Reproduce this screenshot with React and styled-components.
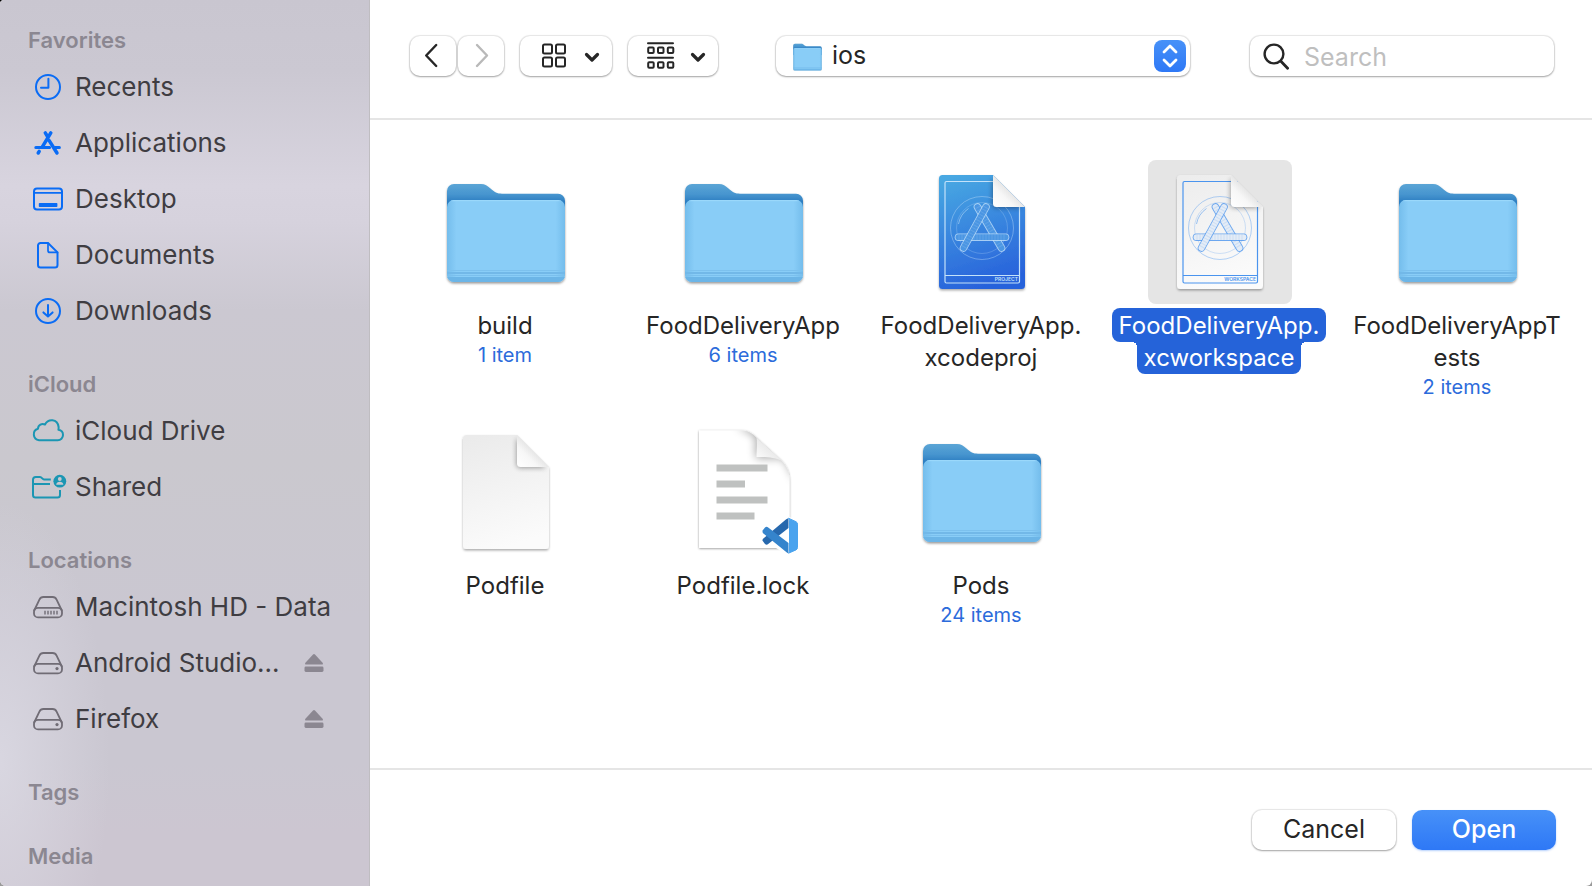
import React, { useState } from "react";
import styled, { createGlobalStyle, css } from "styled-components";

const GlobalStyle = createGlobalStyle`
  *, *::before, *::after { box-sizing: border-box; }
  body {
    margin: 0;
    background: linear-gradient(#000, #9a9a9a);
    font-family: Inter, "Liberation Sans", sans-serif;
    color: #262626;
  }
  button, input, select { font: inherit; color: inherit; }
`;

/* ---------- window ---------- */

const Window = styled.div`
  display: flex;
  min-height: 100vh;
  background: #fff;
  border-radius: 4px 0 6px 6px;
  overflow: hidden;
`;

const Main = styled.main`
  flex: 1;
  min-width: 0;
  display: flex;
  flex-direction: column;
`;

/* ---------- sidebar ---------- */

const Sidebar = styled.nav`
  flex: none;
  width: 370px;
  padding: 21px 0 0;
  display: flex;
  flex-direction: column;
  gap: 26px;
  border-right: 1px solid #bfbdc1;
  background:
    radial-gradient(ellipse 110px 260px at 0 86%, rgba(218, 216, 226, 0.9), rgba(218, 216, 226, 0)),
    linear-gradient(#c9c6d0 0%, #cbc8d2 8%, #d8d4df 21%, #d6d2dd 25%, #cbc8d1 35%, #cac8ce 52%, #cac7d1 70%, #cac7d1 86%, #ccc6d1 94%);
`;

const Group = styled.section`
  display: flex;
  flex-direction: column;
`;

const GroupTitle = styled.h2`
  margin: 0;
  padding-left: 28px;
  font-size: 22px;
  font-weight: 600;
  line-height: 38px;
  color: #8b8791;
`;

const Place = styled.div`
  display: flex;
  align-items: center;
  height: 56px;
  padding: 0 45px 0 31px;
`;

const PlaceLink = styled.a`
  flex: 1;
  display: flex;
  align-items: center;
  gap: 10px;
  min-width: 0;
  font-size: 26px;
  line-height: 32px;
  white-space: nowrap;
  color: #3f3d42;
  text-decoration: none;
`;

const PlaceIcon = styled.svg`
  flex: none;
  width: 34px;
  height: 34px;
  overflow: visible;
  fill: none;
  stroke: ${(p) => p.$tint};
  stroke-width: 2;
  stroke-linecap: round;
  stroke-linejoin: round;
`;

const EjectButton = styled.button`
  display: flex;
  padding: 0;
  border: 0;
  background: none;
  color: #8b8791;
`;

/* ---------- toolbar ---------- */

const Toolbar = styled.header`
  display: flex;
  align-items: center;
  height: 120px;
  padding: 0 38px 6px 40px;
  border-bottom: 2px solid #e5e5e5;
`;

const Tools = styled.div`
  display: flex;
  gap: 16px;
`;

const NavPair = styled.div`
  display: flex;
  gap: 2px;
`;

const raised = css`
  border: 0;
  border-radius: 10px;
  background: #fff;
  box-shadow: 0 0 1px 1px rgba(0, 0, 0, 0.09), 0 1px 2px rgba(0, 0, 0, 0.3);
`;

const ToolButton = styled.button`
  ${raised}
  display: flex;
  align-items: center;
  justify-content: center;
  width: ${(p) => p.$width}px;
  height: 40px;
  padding: 0;
  svg {
    overflow: visible;
    fill: none;
    stroke: #262626;
    stroke-linecap: round;
    stroke-linejoin: round;
  }
  &:disabled svg { stroke: #b9b9b9; }
`;

const PathBox = styled.label`
  ${raised}
  flex: 1;
  display: flex;
  align-items: center;
  gap: 6px;
  min-width: 180px;
  height: 40px;
  margin: 0 60px 0 58px;
  padding: 0 4px 0 17px;
`;

const PathSelect = styled.select`
  flex: 1;
  min-width: 0;
  height: 40px;
  padding: 0 0 3px 4px;
  border: 0;
  outline: 0;
  background: none;
  appearance: none;
  font-size: 25px;
`;

const Stepper = styled.span`
  display: flex;
  align-items: center;
  justify-content: center;
  width: 32px;
  height: 32px;
  border-radius: 8px;
  background: linear-gradient(#4791f8, #2e78f6);
`;

const SearchBox = styled.label`
  ${raised}
  display: flex;
  align-items: center;
  gap: 14px;
  width: 304px;
  height: 40px;
  padding: 0 12px;
`;

const SearchInput = styled.input`
  flex: 1;
  min-width: 0;
  height: 40px;
  padding: 2px 0 0;
  border: 0;
  outline: 0;
  background: none;
  font-size: 25px;
  &::placeholder { color: #bfbfbf; opacity: 1; }
`;

/* ---------- files ---------- */

const Files = styled.div`
  flex: 1;
  display: grid;
  grid-template-columns: repeat(5, minmax(0, 1fr));
  grid-auto-rows: 260px;
  align-content: start;
  padding: 40px 15px 20px 17px;
`;

const FileButton = styled.button`
  display: flex;
  flex-direction: column;
  align-items: center;
  justify-content: flex-start;
  padding: 0;
  border: 0;
  background: none;
`;

const Tile = styled.span`
  display: block;
  width: 144px;
  height: 144px;
  margin-bottom: 4px;
  border-radius: 8px;
  background: ${(p) => (p.$selected ? "#e5e5e5" : "transparent")};
`;

const Caption = styled.span`
  display: flex;
  flex-direction: column;
  align-items: center;
  margin-right: 2px;
`;

const NameLine = styled.span`
  position: relative;
  padding: 0 7px;
  border-radius: 0 0 8px 8px;
  font-size: 24px;
  line-height: 32px;
  white-space: nowrap;
  color: #262626;
  &:first-of-type {
    padding-top: 2px;
    border-radius: 8px;
  }
  ${(p) =>
    p.$selected &&
    css`
      color: #fff;
      background: #2563d9;
      & + &::before,
      & + &::after {
        content: "";
        position: absolute;
        top: 0;
        width: 5px;
        height: 5px;
      }
      & + &::before {
        right: 100%;
        background: radial-gradient(circle at 0 100%, transparent 5px, #2563d9 5px);
      }
      & + &::after {
        left: 100%;
        background: radial-gradient(circle at 100% 100%, transparent 5px, #2563d9 5px);
      }
    `}
`;

const Count = styled.span`
  font-size: 20px;
  line-height: 26px;
  color: #2c6bdb;
`;

/* ---------- footer ---------- */

const Footer = styled.footer`
  display: flex;
  justify-content: flex-end;
  gap: 16px;
  padding: 40px 36px 36px;
  border-top: 2px solid #e5e5e5;
`;

const DialogButton = styled.button`
  ${raised}
  width: 144px;
  height: 40px;
  padding: 0 0 2px;
  font-size: 25px;
  line-height: 32px;
  ${(p) =>
    p.$primary &&
    css`
      color: #fff;
      font-weight: 500;
      background: linear-gradient(#4791f8, #2e78f6);
      box-shadow: 0 1px 2px rgba(46, 120, 246, 0.35);
    `}
`;

/* ---------- drawings ---------- */

const placeGlyphs = {
  recents: (
    <>
      <circle cx="17" cy="17" r="12" />
      <path d="M17.4 8.8V17.8H10" />
    </>
  ),
  applications: (
    <g strokeWidth="3.5">
      <path d="M19.8 6.9L11.2 21.2M14.3 6.9l2.4 3.8M18.2 14.6l7.8 12.4M8.2 25.4L7.2 27" />
      <path d="M4.8 21.5H18.6M24.2 21.5h4.2" strokeWidth="3" />
    </g>
  ),
  desktop: (
    <>
      <rect x="3" y="6.5" width="28" height="21" rx="3" />
      <path d="M3.5 10.8h27" strokeWidth="1.7" />
      <rect x="7.8" y="21" width="18.6" height="4" rx="0.8" fill="currentColor" stroke="none" />
    </>
  ),
  documents: (
    <>
      <path d="M17 5H9.5A2.5 2.5 0 0 0 7 7.500V27a2.500 2.500 0 0 0 2.500 2.500H24a2.500 2.500 0 0 0 2.500-2.500V14.400z" />
      <path d="M17 5v7.400a2 2 0 0 0 2 2h7.500" strokeWidth="1.7" />
    </>
  ),
  downloads: (
    <>
      <circle cx="17" cy="17" r="12" />
      <path d="M17 11v11.500M12.400 18.400l4.600 4.200 4.600-4.200" />
    </>
  ),
  cloud: (
    <path d="M8 26.200A5.900 5.900 0 0 1 7 14.700C7 10.800 11 8.900 14 10.500C17 4.600 26.500 4.300 27.600 13C27.700 14 27.600 15 27.400 15.800C30.400 16.200 32 18.400 32 21A5.200 5.200 0 0 1 26.800 26.200Z" />
  ),
  shared: (
    <>
      <path d="M19.800 9.400H13c-1.600 0-2-2.400-4-2.400H4.800A2.800 2.800 0 0 0 2 9.800V25a2.500 2.500 0 0 0 2.500 2.500H26.500A2.500 2.500 0 0 0 29 25V20M2 14h17" strokeLinecap="butt" />
      <circle cx="28.800" cy="11.200" r="6.400" fill="currentColor" stroke="none" />
      <circle cx="28.800" cy="9" r="1.900" fill="#cac8cf" stroke="none" />
      <path d="M25.200 14.800c0-4 7.200-4 7.200 0z" fill="#cac8cf" stroke="none" />
    </>
  ),
  internal: (
    <>
      <path d="M3.200 20.500L8.400 9.600Q9.600 7 12.400 7H21.600Q24.400 7 25.600 9.600L30.800 20.500" strokeWidth="1.800" />
      <rect x="3" y="17.800" width="28" height="9.600" rx="4" strokeWidth="1.800" />
      <path d="M14 20.800v3.600M17 20.800v3.600M20 20.800v3.600M23 20.800v3.600M26 20.800v3.600" strokeWidth="1.400" strokeLinecap="butt" />
    </>
  ),
  external: (
    <>
      <path d="M3.200 20.500L8.400 9.600Q9.600 7 12.400 7H21.600Q24.400 7 25.600 9.600L30.800 20.500" strokeWidth="1.800" />
      <rect x="3" y="17.800" width="28" height="9.600" rx="4" strokeWidth="1.800" />
      <circle cx="26" cy="22.600" r="1.600" fill="currentColor" stroke="none" />
    </>
  ),
};

const EjectGlyph = () => (
  <svg width="20" height="20" viewBox="0 0 20 20" fill="currentColor" aria-hidden="true">
    <path d="M9 1.500Q10 .5 11 1.500L18.800 10Q19.600 11.500 18 11.600H2Q.4 11.500 1.200 10Z" />
    <rect x="0.500" y="13.600" width="19" height="5.400" rx="1.400" />
  </svg>
);

const folderBack =
  "M13 31a7 7 0 0 1 7-7h27c4 0 6.500 1.800 9.500 4.500c4 3.600 6.500 5.200 11.500 5.200h56a7 7 0 0 1 7 7v25H13z";

function FolderDrawing({ id, small }) {
  const size = small
    ? { width: 29, height: 29, viewBox: "12 18 120 106", preserveAspectRatio: "none" }
    : { width: 144, height: 144, viewBox: "0 0 144 144" };
  return (
    <svg {...size} aria-hidden="true">
      <defs>
        <linearGradient id={`${id}-back`} x1="0" y1="0" x2="0" y2="1">
          <stop offset="0" stopColor="#5ba5d6" />
          <stop offset="0.250" stopColor="#4795cf" />
          <stop offset="0.420" stopColor="#2e7fc2" />
        </linearGradient>
        <linearGradient id={`${id}-front`}>
          <stop offset="0" stopColor="#74bdec" />
          <stop offset="0.080" stopColor="#89cdf7" />
          <stop offset="0.920" stopColor="#89cdf7" />
          <stop offset="1" stopColor="#74bdec" />
        </linearGradient>
        <filter id={`${id}-shade`} x="-10%" y="-10%" width="120%" height="125%">
          <feDropShadow dx="0" dy="1.500" stdDeviation="1.200" floodColor="#000" floodOpacity="0.400" />
        </filter>
        <clipPath id={`${id}-clip`}>
          <rect x="13" y="40" width="118" height="82" rx="7" />
        </clipPath>
      </defs>
      <g filter={`url(#${id}-shade)`}>
        <path d={folderBack} fill={`url(#${id}-back)`} />
        <rect x="13" y="40" width="118" height="82" rx="7" fill={`url(#${id}-front)`} />
      </g>
      <g clipPath={`url(#${id}-clip)`}>
        <rect x="13" y="40" width="118" height="1.200" fill="#9ad8fb" />
        <rect x="13" y="110" width="118" height="1" fill="#7cc1ee" />
        <rect x="13" y="112" width="118" height="2" fill="#72b8e8" />
        <rect x="13" y="115" width="118" height="1" fill="#7abfed" />
        <rect x="13" y="117" width="118" height="5" fill="#6cb5e7" />
      </g>
    </svg>
  );
}

const docShape = "M32.500 15H83l32 32v78.500a3.500 3.500 0 0 1-3.500 3.500h-79a3.500 3.500 0 0 1-3.500-3.500v-107a3.500 3.500 0 0 1 3.500-3.500z";

function DocumentDrawing({ id, from, to, children }) {
  return (
    <svg width="144" height="144" viewBox="0 0 144 144" aria-hidden="true">
      <defs>
        <linearGradient id={`${id}-page`} x1="0.200" y1="0" x2="0.450" y2="1">
          <stop offset="0" stopColor={from} />
          <stop offset="1" stopColor={to} />
        </linearGradient>
        <linearGradient id={`${id}-fold`} x1="0" y1="1" x2="0.550" y2="0.450">
          <stop offset="0" stopColor="#fff" />
          <stop offset="0.600" stopColor="#f7f7f7" />
          <stop offset="1" stopColor="#e2e2e2" />
        </linearGradient>
        <filter id={`${id}-shade`} x="-10%" y="-10%" width="120%" height="120%">
          <feDropShadow dx="0" dy="1.500" stdDeviation="1.300" floodColor="#000" floodOpacity="0.330" />
        </filter>
        <filter id={`${id}-soft`} x="-30%" y="-30%" width="160%" height="160%">
          <feGaussianBlur stdDeviation="2.600" />
        </filter>
        <clipPath id={`${id}-clip`}>
          <path d={docShape} />
        </clipPath>
      </defs>
      <path d={docShape} fill={`url(#${id}-page)`} filter={`url(#${id}-shade)`} />
      <g clipPath={`url(#${id}-clip)`}>
        {children}
        <path d="M82.500 18V44a4 4 0 0 0 4 4H112z" fill="#000" opacity="0.360" filter={`url(#${id}-soft)`} />
      </g>
      <path d="M83 15l32 32H86.500a3.500 3.500 0 0 1-3.500-3.500z" fill={`url(#${id}-fold)`} />
    </svg>
  );
}

function Blueprint({ ink, fill, tag }) {
  const legs = ["M67.500 47L91.500 88", "M48.500 77.200H95.500", "M76 47L53.500 88"];
  return (
    <>
      <g fill="none" stroke={ink}>
        <rect x="35" y="21.500" width="74.500" height="101.500" rx="1.500" strokeWidth="1.200" />
        <path d="M35 115.500h74.500" strokeWidth="1.200" />
        <circle cx="72" cy="68" r="31.500" strokeWidth="0.900" opacity="0.450" />
        <circle cx="72" cy="68" r="25.500" strokeWidth="0.700" opacity="0.350" />
        <path d="M48.500 64a24 24 0 0 1 10-15.500" strokeWidth="0.900" opacity="0.600" />
      </g>
      {legs.map((d) => (
        <g key={d} fill="none" strokeLinecap="round">
          <path d={d} stroke={ink} strokeWidth="7.600" opacity="0.800" />
          <path d={d} stroke={fill} strokeWidth="5.800" />
          <path d={d} stroke={ink} strokeWidth="5.800" strokeDasharray="1 2" strokeLinecap="butt" opacity="0.160" />
        </g>
      ))}
      <text x="108" y="121" textAnchor="end" fontSize="5" fontWeight="600" fill={ink}>
        {tag}
      </text>
    </>
  );
}

function LockDrawing() {
  const page = "M27 10.500H70C78 10.500 82 15 87 20L109 40C114 45 117.500 51 117.500 60V128H27Z";
  return (
    <svg width="144" height="144" viewBox="0 0 144 144" aria-hidden="true">
      <defs>
        <linearGradient id="lock-fold" x1="0" y1="1" x2="0.550" y2="0.450">
          <stop offset="0" stopColor="#fff" />
          <stop offset="1" stopColor="#e8e8e8" />
        </linearGradient>
        <filter id="lock-shade" x="-10%" y="-10%" width="120%" height="120%">
          <feDropShadow dx="0" dy="0.700" stdDeviation="0.900" floodColor="#000" floodOpacity="0.420" />
        </filter>
        <filter id="lock-soft" x="-40%" y="-40%" width="180%" height="180%">
          <feGaussianBlur stdDeviation="5" />
        </filter>
        <clipPath id="lock-clip">
          <path d={page} />
        </clipPath>
      </defs>
      <path d={page} fill="#fff" filter="url(#lock-shade)" />
      <g clipPath="url(#lock-clip)">
        <path d="M64 6L84 16V38H112L124 62L124 6z" fill="#000" opacity="0.360" filter="url(#lock-soft)" />
      </g>
      <path d="M84.500 17.500C85.500 24 84.500 31 84.500 37C93 37 103 37 111 41.500Z" fill="url(#lock-fold)" />
      <g fill="#bfc1c0">
        <rect x="44.500" y="44.500" width="51" height="7" />
        <rect x="44.500" y="60.500" width="28.500" height="7" />
        <rect x="44.500" y="76.500" width="51" height="7" />
        <rect x="44.500" y="92.500" width="38" height="7" />
      </g>
      <path d="M88 118L99 104L116 96.500L128 101V132L116 135.500L104 128z" fill="#fff" />
      <path d="M90.400 120.500L93 124q1.500 1.300 3.200.1L116.500 108V98.200q-1.500.3-2.600 1.400L90.800 119z" fill="#2768ad" />
      <path d="M90.400 110.800L93 107.500q1.500-1.300 3.200-.1L116.500 123v10.200q-1.500-.3-2.600-1.400L90.800 113z" fill="#3584cc" />
      <path d="M116.500 98.200L124 101.700q1.500.8 1.500 2.500v23.200q0 1.700-1.500 2.500L116.500 133.200q1-.5 1-2V100.200q0-1.500-1-2z" fill="#4aa3ee" stroke="#4aa3ee" />
    </svg>
  );
}

/* ---------- data ---------- */

const BLUE = "#0a6cf5";
const TEAL = "#1b96b3";
const GREY = "#706c75";

const groups = [
  {
    title: "Favorites",
    places: [
      { name: "Recents", glyph: "recents", tint: BLUE },
      { name: "Applications", glyph: "applications", tint: BLUE },
      { name: "Desktop", glyph: "desktop", tint: BLUE },
      { name: "Documents", glyph: "documents", tint: BLUE },
      { name: "Downloads", glyph: "downloads", tint: BLUE },
    ],
  },
  {
    title: "iCloud",
    places: [
      { name: "iCloud Drive", glyph: "cloud", tint: TEAL },
      { name: "Shared", glyph: "shared", tint: TEAL },
    ],
  },
  {
    title: "Locations",
    places: [
      { name: "Macintosh HD - Data", glyph: "internal", tint: GREY },
      { name: "Android Studio...", glyph: "external", tint: GREY, eject: true },
      { name: "Firefox", glyph: "external", tint: GREY, eject: true },
    ],
  },
  { title: "Tags", places: [] },
  { title: "Media", places: [] },
];

const files = [
  { lines: ["build"], kind: "folder", count: "1 item" },
  { lines: ["FoodDeliveryApp"], kind: "folder", count: "6 items" },
  { lines: ["FoodDeliveryApp.", "xcodeproj"], kind: "project" },
  { lines: ["FoodDeliveryApp.", "xcworkspace"], kind: "workspace" },
  { lines: ["FoodDeliveryAppT", "ests"], kind: "folder", count: "2 items" },
  { lines: ["Podfile"], kind: "plain" },
  { lines: ["Podfile.lock"], kind: "lock" },
  { lines: ["Pods"], kind: "folder", count: "24 items" },
];

function FileDrawing({ kind, id }) {
  if (kind === "folder") return <FolderDrawing id={id} />;
  if (kind === "lock") return <LockDrawing />;
  if (kind === "project")
    return (
      <DocumentDrawing id={id} from="#48a8e2" to="#2862db">
        <Blueprint ink="#c4e2fa" fill="#4b96e3" tag="PROJECT" />
      </DocumentDrawing>
    );
  if (kind === "workspace")
    return (
      <DocumentDrawing id={id} from="#ededed" to="#fbfbfb">
        <Blueprint ink="#4a94ee" fill="#e4ecf6" tag="WORKSPACE" />
      </DocumentDrawing>
    );
  return <DocumentDrawing id={id} from="#ebebeb" to="#fbfbfb" />;
}

export default function App() {
  const [selected, setSelected] = useState(3);
  return (
    <>
      <GlobalStyle />
      <Window>
        <Sidebar aria-label="Places">
          {groups.map((group) => (
            <Group key={group.title}>
              <GroupTitle>{group.title}</GroupTitle>
              {group.places.map((place) => (
                <Place key={place.name}>
                  <PlaceLink href="#">
                    <PlaceIcon $tint={place.tint} color={place.tint} viewBox="0 0 34 34" aria-hidden="true">
                      {placeGlyphs[place.glyph]}
                    </PlaceIcon>
                    {place.name}
                  </PlaceLink>
                  {place.eject && (
                    <EjectButton type="button" aria-label={`Eject ${place.name}`}>
                      <EjectGlyph />
                    </EjectButton>
                  )}
                </Place>
              ))}
            </Group>
          ))}
        </Sidebar>

        <Main>
          <Toolbar>
            <Tools>
              <NavPair>
                <ToolButton type="button" $width={46} aria-label="Back">
                  <svg width="18" height="26" viewBox="0 0 18 26" strokeWidth="2.400">
                    <path d="M12.200 2L2.200 12.500l10 10.500" />
                  </svg>
                </ToolButton>
                <ToolButton type="button" $width={46} aria-label="Forward" disabled>
                  <svg width="18" height="26" viewBox="0 0 18 26" strokeWidth="2.400">
                    <path d="M5 2L15 12.500L5 23" />
                  </svg>
                </ToolButton>
              </NavPair>
              <ToolButton type="button" $width={92} aria-label="View as icons">
                <svg width="60" height="28" viewBox="0 0 60 28" aria-hidden="true">
                  <g strokeWidth="2">
                    <rect x="7" y="2.500" width="9" height="9" rx="1.500" />
                    <rect x="20" y="2.500" width="9" height="9" rx="1.500" />
                    <rect x="7" y="15.500" width="9" height="9" rx="1.500" />
                    <rect x="20" y="15.500" width="9" height="9" rx="1.500" />
                  </g>
                  <path d="M50.500 12.500l5.500 5.500 5.500-5.500" strokeWidth="3.200" />
                </svg>
              </ToolButton>
              <ToolButton type="button" $width={90} aria-label="Group items">
                <svg width="60" height="28" viewBox="0 0 60 28" aria-hidden="true">
                  <g strokeWidth="2">
                    <path d="M5 1.200H30M5 15.800H30" />
                    {[5.2, 15, 24.8].map((x) => (
                      <g key={x}>
                        <rect x={x} y="5.500" width="5.500" height="5.500" rx="1" />
                        <rect x={x} y="20.200" width="5.500" height="5.500" rx="1" />
                      </g>
                    ))}
                  </g>
                  <path d="M49.500 12.500l5.500 5.500 5.500-5.500" strokeWidth="3.200" />
                </svg>
              </ToolButton>
            </Tools>

            <PathBox>
              <FolderDrawing id="path" small />
              <PathSelect aria-label="Location" defaultValue="ios">
                <option value="ios">ios</option>
              </PathSelect>
              <Stepper aria-hidden="true">
                <svg width="20" height="28" viewBox="0 0 20 28" fill="none" stroke="#fff" strokeWidth="2.800" strokeLinecap="round" strokeLinejoin="round">
                  <path d="M4 10L10 4l6 6M4 18l6 6 6-6" />
                </svg>
              </Stepper>
            </PathBox>

            <SearchBox>
              <svg width="28" height="28" viewBox="0 0 28 28" fill="none" stroke="#262626" strokeWidth="2.400" strokeLinecap="round" aria-hidden="true">
                <circle cx="12" cy="12" r="9.400" />
                <path d="M18.900 19.300L25.600 26.200" strokeWidth="2.800" />
              </svg>
              <SearchInput type="text" placeholder="Search" aria-label="Search" />
            </SearchBox>
          </Toolbar>

          <Files>
            {files.map((file, i) => {
              const on = i === selected;
              return (
                <FileButton key={file.lines.join("")} type="button" aria-pressed={on} onClick={() => setSelected(i)}>
                  <Tile $selected={on}>
                    <FileDrawing kind={file.kind} id={`file-${i}`} />
                  </Tile>
                  <Caption>
                    {file.lines.map((line) => (
                      <NameLine key={line} $selected={on}>
                        {line}
                      </NameLine>
                    ))}
                    {file.count && <Count>{file.count}</Count>}
                  </Caption>
                </FileButton>
              );
            })}
          </Files>

          <Footer>
            <DialogButton type="button">Cancel</DialogButton>
            <DialogButton type="button" $primary>
              Open
            </DialogButton>
          </Footer>
        </Main>
      </Window>
    </>
  );
}
